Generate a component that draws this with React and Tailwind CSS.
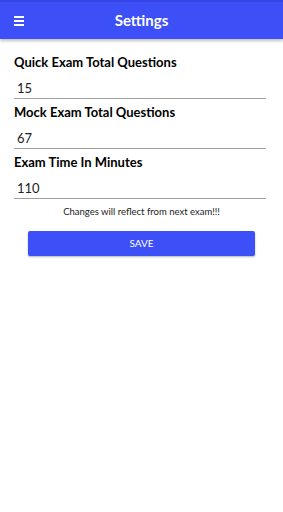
export default function App() {
  const fields = [
    { label: "Quick Exam Total Questions", value: "15" },
    { label: "Mock Exam Total Questions", value: "67" },
    { label: "Exam Time In Minutes", value: "110" },
  ];

  return (
    <div className="w-[283px] h-[512px] bg-white" style={{ fontFamily: 'Lato, "Noto Sans", sans-serif' }}>
      {/* Header */}
      <div className="relative h-[39px] bg-[#3d4ff7] border-t-2 border-[#3545e6] shadow-[0_2px_3px_rgba(0,0,0,0.25)] flex items-center justify-center">
        <button className="absolute left-[14px] top-[14px] flex flex-col gap-[2px]">
          <span className="block w-[10px] h-[2px] bg-white" />
          <span className="block w-[10px] h-[2px] bg-white" />
          <span className="block w-[10px] h-[2px] bg-white" />
        </button>
        <h1 className="text-white font-bold text-[15px] leading-none -mt-[1px]">Settings</h1>
      </div>

      {/* Form */}
      <div className="px-[14px] pt-[14px] flex flex-col">
        {fields.map((f) => (
          <div key={f.label} className="flex flex-col mb-[4px]">
            <p className="text-[13px] font-bold text-black leading-[18px]">{f.label}</p>
            <div className="mt-[7px] pl-[3px] border-b border-[#a0a0a0] mr-[3px] text-[13px] leading-[20px] text-[#222]">
              {f.value}
            </div>
          </div>
        ))}

        <p className="text-center text-[9.5px] leading-[14px] text-[#222] mt-[2px]">Changes will reflect from next exam!!!</p>

        <button className="mt-[12px] mx-[14px] h-[25px] bg-[#3d4ff7] text-white text-[10px] rounded-[2px] shadow-[0_1px_2px_rgba(0,0,0,0.3)]">
          SAVE
        </button>
      </div>
    </div>
  );
}
